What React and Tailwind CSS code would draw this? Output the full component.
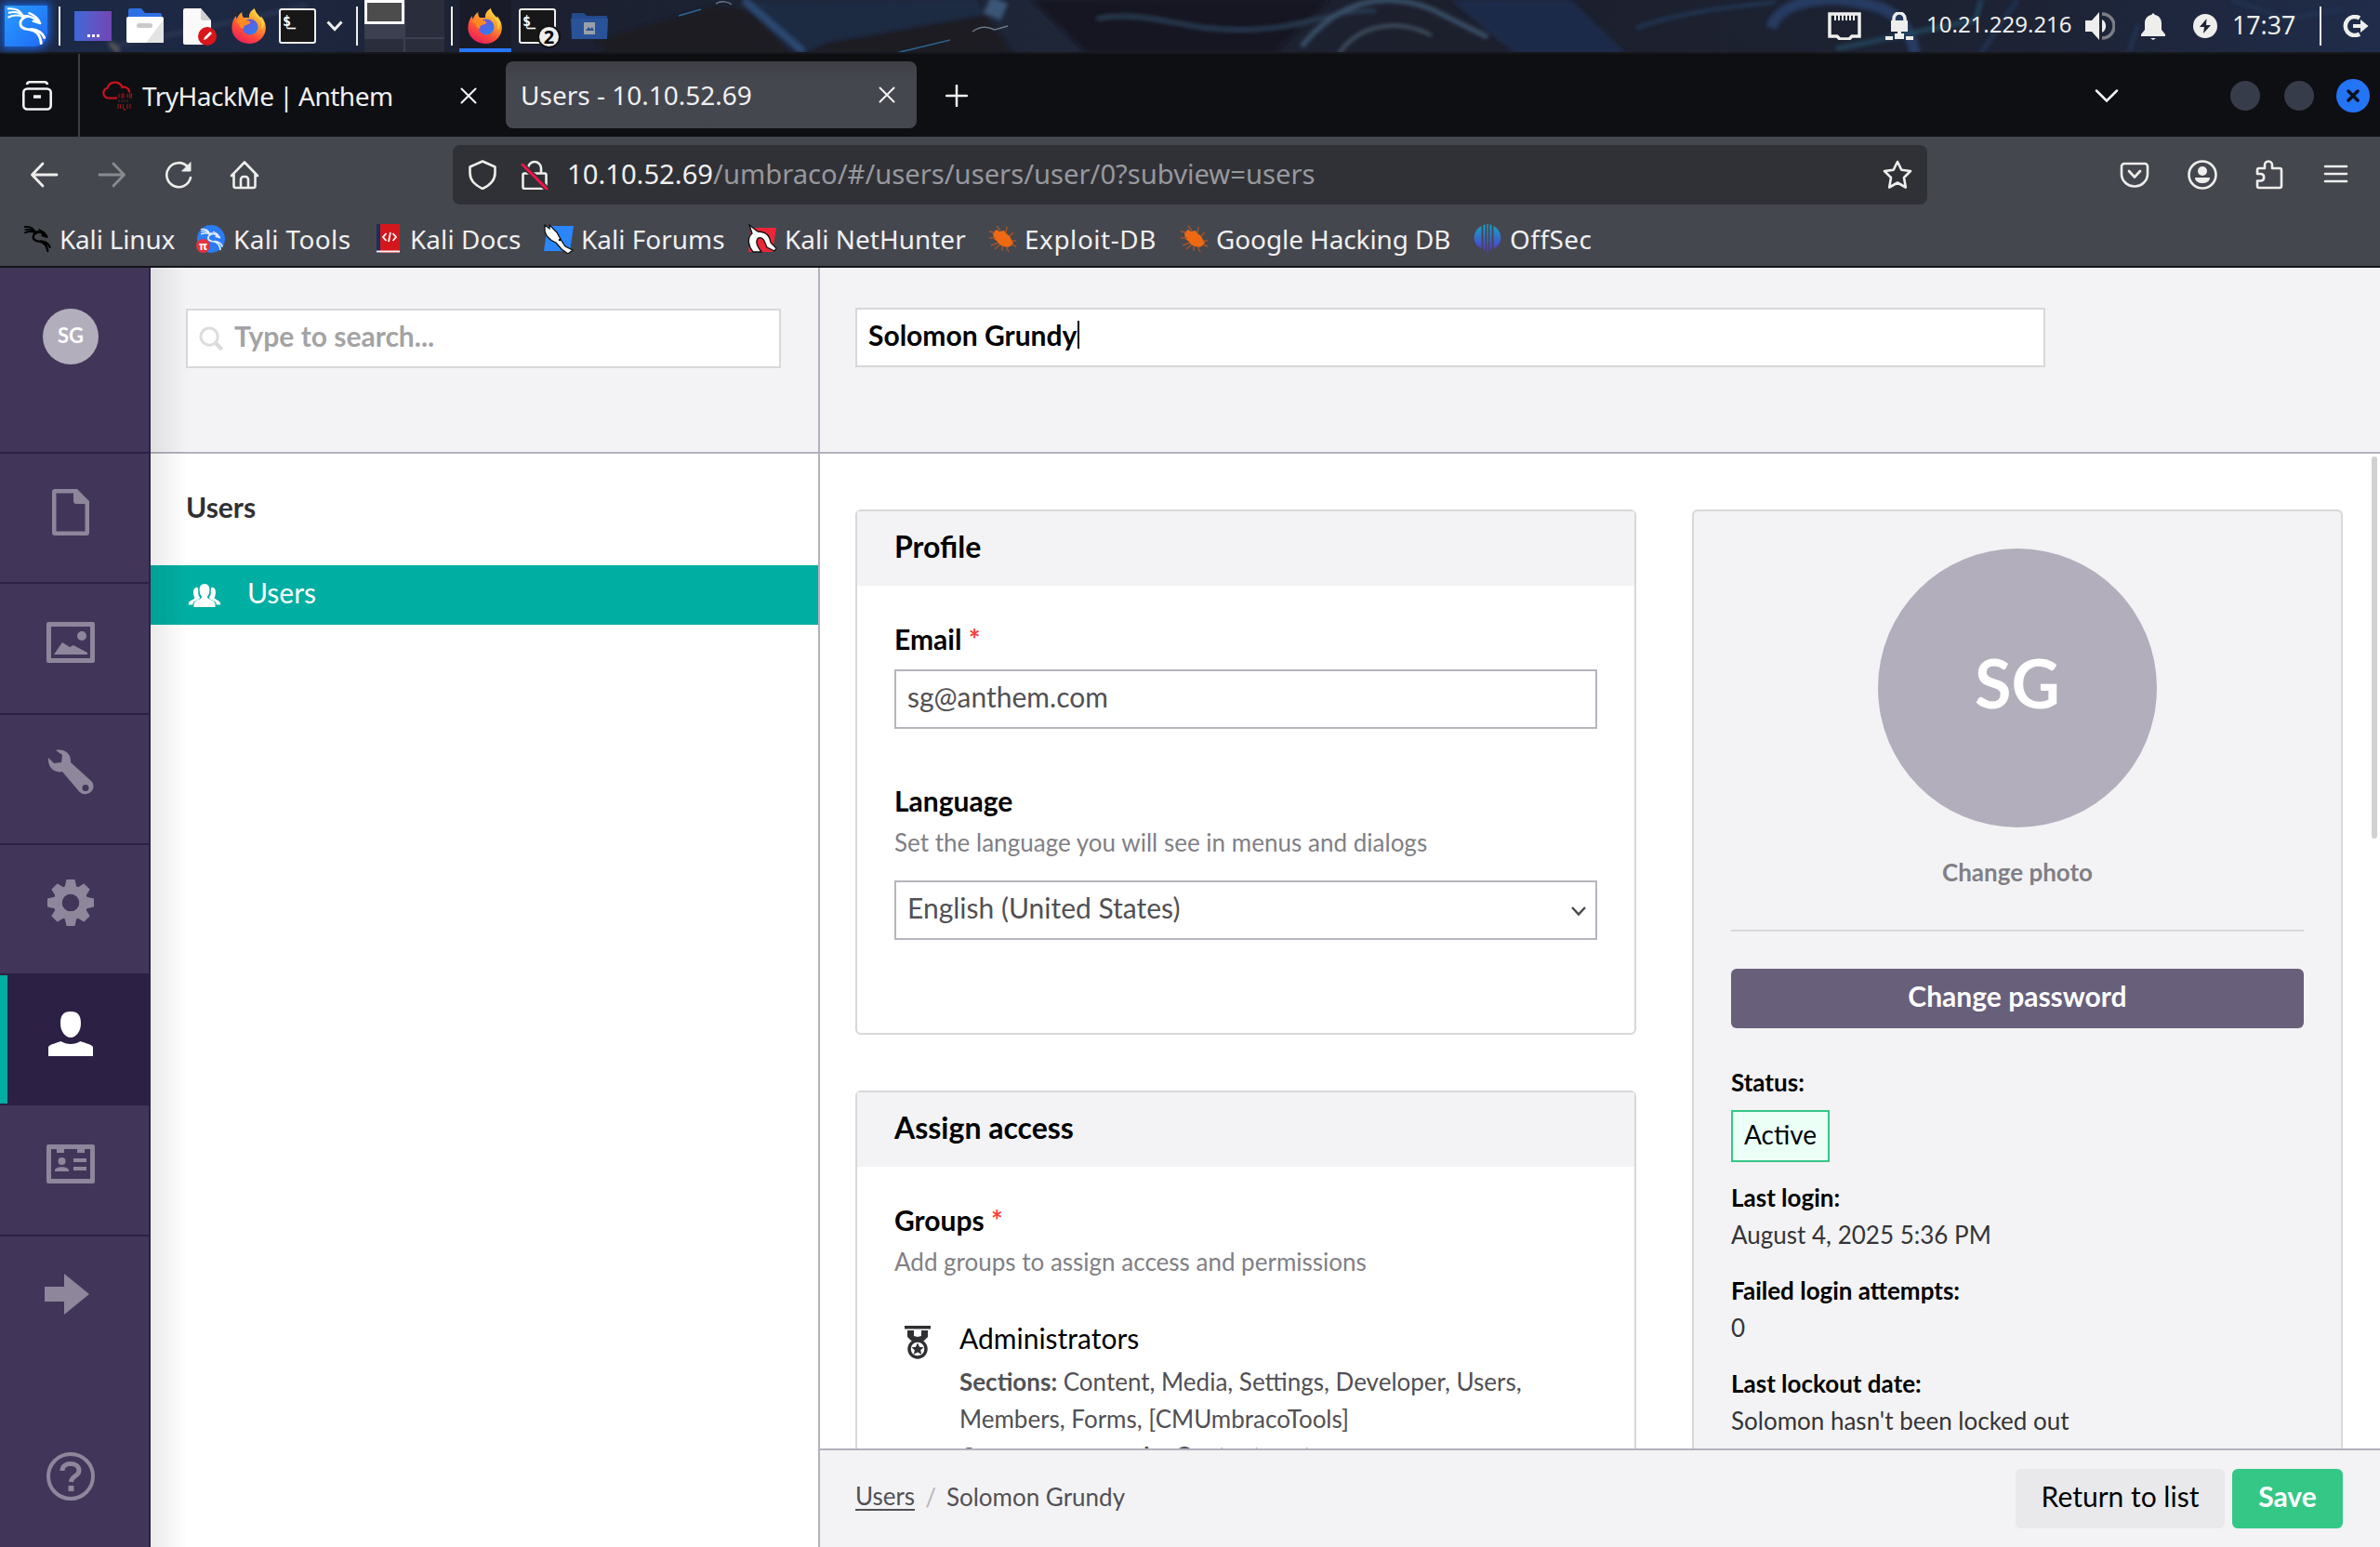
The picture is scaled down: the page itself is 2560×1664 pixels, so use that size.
import React from "react";

function Dragon({ className = "", strokeWidth = 3 }) {
  return (
    <svg viewBox="4 5 48 46" className={className} fill="none" stroke="currentColor" strokeWidth={strokeWidth} strokeLinecap="round" strokeLinejoin="round">
      <path d="M8 8.500C16 8 21 10 24 15.500M9 13C15 11.500 20 12.500 24 16M8.500 18C14 15 19 15.500 25 17.500" strokeWidth={strokeWidth * 0.75} />
      <path d="M24 17.500L30 17C19 20 19 30 29 31.500C38 32.500 44 36 45 47.500M34 31.500C41 32 46 35 48.500 41" />
      <path d="M25 17C33 16 38 19 41 24M31.500 13.500C38 16 42 20 44 25L36 22.500" strokeWidth={strokeWidth * 0.8} />
    </svg>
  );
}

function Firefox({ id }) {
  return (
    <svg viewBox="0 0 38 38" className="size-[38px] shrink-0">
      <defs>
        <linearGradient id={id + "a"} x1="0.85" y1="0" x2="0.3" y2="1">
          <stop offset="0" stopColor="#ffe14a" />
          <stop offset="0.4" stopColor="#ff9a2b" />
          <stop offset="0.7" stopColor="#ff4a3a" />
          <stop offset="1" stopColor="#e81f5c" />
        </linearGradient>
        <linearGradient id={id + "b"} x1="0" y1="0" x2="0.6" y2="1">
          <stop offset="0" stopColor="#7a4bd8" />
          <stop offset="1" stopColor="#2f7df0" />
        </linearGradient>
      </defs>
      <path d="M25 0c0 5 3 7 6 10.500l1-2c4 5 5.500 10 4.500 15.500C35 32 28 38 19 38S1.500 32 .500 23C0 16.500 2 11.500 5 8c0 1.500 0 2.500.500 3.500C7 8 9 5.500 11.500 4c-.500 2 0 4.500 1.500 6h6c-.500-4 2-8 6-10z" fill={"url(#" + id + "a)"} />
      <circle cx="20" cy="20" r="8.500" fill={"url(#" + id + "b)"} />
      <path d="M5 14c3-3 6-3 8.500-2 2 .5 4 .5 7 3-1 2-3 2.500-5 3-2 .6-3 2-2 4-4-1-5.500-3-5-5.500-1.200-.6-2.200-1.300-3.500-2.500z" fill="#ff8a20" />
      <path d="M25 1c-1 5 3 8 6 12 2 3 2 7 1 10 2-1.500 3-4.500 3-8-2-5-8-8-10-14z" fill="#ffd84a" opacity=".85" />
    </svg>
  );
}

function Terminal() {
  return (
    <svg viewBox="0 0 40 38" className="h-[38px] w-[40px]">
      <rect x="1" y="1" width="38" height="36" rx="2" fill="#171717" stroke="#f0f0ee" strokeWidth="2" />
      <text x="4" y="19" fontSize="15" fontWeight="700" fontFamily="'DejaVu Sans Mono', monospace" fill="#fff" textLength="14">$_</text>
    </svg>
  );
}

function Wallpaper() {
  return (
    <svg viewBox="0 0 2560 58" preserveAspectRatio="none" className="absolute inset-0 h-[58px] w-full">
      <defs>
        <linearGradient id="wp" x1="0" x2="1" y1="0" y2="0">
          <stop offset="0" stopColor="#1c2a48" />
          <stop offset=".12" stopColor="#1d2740" />
          <stop offset=".22" stopColor="#1c2030" />
          <stop offset=".45" stopColor="#1e2638" />
          <stop offset=".6" stopColor="#1c1f2c" />
          <stop offset=".85" stopColor="#1d2334" />
          <stop offset="1" stopColor="#202c4a" />
        </linearGradient>
        <filter id="soft"><feGaussianBlur stdDeviation="2" /></filter>
      </defs>
      <rect width="2560" height="58" fill="url(#wp)" />
      <g filter="url(#soft)">
        <path d="M805 0h245l10 20-180 36h-22z" fill="#1f2a42" />
        <path d="M640 44l130-38 40 6 40 46H655z" fill="#1a1a22" />
        <path d="M800 0l64 56" stroke="#2c4a72" strokeWidth="8" />
        <path d="M866 56l24-10 170-30 30 42z" fill="#1a1b24" />
        <path d="M1075 0l-8 18" stroke="#3b5576" strokeWidth="20" />
        <path d="M1110 0l60 58h200l60-58z" fill="#171820" />
        <path d="M1180 20c60-10 90 14 160 12s90-22 140-20" stroke="#2c3d55" strokeWidth="4" fill="none" />
        <path d="M1400 50c40-50 90-60 140-40l60 30" stroke="#3a536c" strokeWidth="5" fill="none" />
        <path d="M1440 58c20-30 60-40 100-20" stroke="#4b5e70" strokeWidth="3" fill="none" />
        <path d="M1560 0l70 58h120L1690 0z" fill="#1f2c48" />
        <path d="M1760 30c60-20 90-20 150-28" stroke="#243e5e" strokeWidth="3" fill="none" />
        <path d="M1905 30c10-30 60-36 100-26 40 6 50 30 55 54" stroke="#263a62" strokeWidth="12" fill="none" />
        <path d="M1975 52c30-4 90-20 150-30l6-22" stroke="#21455c" strokeWidth="5" fill="none" />
        <path d="M2130 58l40-58M2290 56l10-30M2400 0l60 20 60-10" stroke="#20304f" strokeWidth="5" fill="none" />
        <path d="M120 50l60-12 150-32" stroke="#2c3852" strokeWidth="4" />
        <path d="M118 46l10 10" stroke="#5d5b5a" strokeWidth="5" />
      </g>
      <path d="M730 17l24-7M964 57l58-14" stroke="#2d6596" strokeWidth="1.500" />
      <path d="M770 4c6-4 14-2 17 1M1046 34c8-6 16-6 24-2l14-4" stroke="#6b7788" strokeWidth="1.500" fill="none" />
      <rect y="56" width="2560" height="2" fill="#17181d" />
    </svg>
  );
}

function Taskbar() {
  return (
    <div className="relative h-[58px] w-full overflow-hidden bg-[#1d2333]">
      <Wallpaper />
      <div className="relative flex h-[56px] items-center">
        <div className="ml-[5px] flex h-[44px] w-[46px] items-center justify-center rounded-br-[14px] bg-linear-to-br from-[#2a9dff] to-[#2268f5] shadow-[0_0_8px_3px_#1b5fd0]">
          <Dragon className="h-[44px] w-[46px] text-white" />
        </div>
        <div className="ml-3 h-[42px] w-[2px] bg-[#eeeeec]" />
        <div className="ml-[15px] flex h-8 w-10 items-end justify-center gap-[2px] bg-linear-to-r from-[#3b68d8] to-[#7145b4] pb-1">
          <i className="size-[3px] bg-white" /><i className="size-[3px] bg-white" /><i className="size-[3px] bg-white" />
        </div>
        <svg viewBox="0 0 42 38" className="ml-[15px] h-[38px] w-[42px]">
          <path d="M3 2a2 2 0 012-2h12l4 5h16a2 2 0 012 2v6H3z" fill="#2f6fe4" />
          <rect x="1" y="9" width="40" height="28" rx="2" fill="#fff" />
          <path d="M41 12v25H22z" fill="#e4e4e4" />
          <rect x="12" y="16" width="17" height="5" rx="2.500" fill="#c9c9c9" />
        </svg>
        <svg viewBox="0 0 38 42" className="ml-[19px] h-[42px] w-[38px]">
          <path d="M1 4a2 2 0 012-2h17l11 13v24a2 2 0 01-2 2H3a2 2 0 01-2-2z" fill="#fafafa" />
          <path d="M20 2l11 13H22a2 2 0 01-2-2z" fill="#d0d0d0" />
          <circle cx="27" cy="32" r="10" fill="#d8161b" />
          <path d="M23 36l1-3 6-6 2 2-6 6z" fill="#fff" />
        </svg>
        <div className="ml-[15px]"><Firefox id="ffa" /></div>
        <div className="ml-[13px]"><Terminal /></div>
        <svg viewBox="0 0 18 12" className="ml-[11px] h-3 w-[18px]" fill="none" stroke="#eeeeec" strokeWidth="3"><path d="M1.500 1.500l7.500 8 7.500-8" /></svg>
        <div className="ml-[14px] h-[42px] w-[2px] bg-[#eeeeec]" />
        <div className="ml-[7px] grid h-[56px] w-[86px] grid-cols-2 gap-[2px] bg-[#3b3f50]">
          <div className="-mr-px h-[26px] border-[3px] border-white bg-[#4c4c4c]" />
          <div className="bg-[#2a2d3b]" /><div className="bg-[#2a2d3b]" /><div className="bg-[#2a2d3b]" />
        </div>
        <div className="ml-[7px] h-[42px] w-[2px] bg-[#eeeeec]" />
        <div className="ml-[7px] flex h-[56px] w-[56px] items-center justify-center border-b-4 border-[#2777ff] bg-[#191b28] pt-1">
          <Firefox id="ffb" />
        </div>
        <div className="relative ml-2">
          <Terminal />
          <div className="absolute left-[20px] top-[18px] flex size-[25px] items-center justify-center rounded-full border-2 border-[#111] bg-[#eeeeec] font-['Noto_Sans',sans-serif] text-[20px] font-bold leading-none text-black">2</div>
        </div>
        <svg viewBox="0 0 40 28" className="ml-[16px] h-7 w-10">
          <path d="M1 0h13l3 3h22v24H1z" fill="#234a8c" />
          <path d="M0 6h40l-1 22H1z" fill="#2a5298" />
          <rect x="14" y="10" width="12" height="13" fill="#9aa0a8" />
          <path d="M16 19l3-4 2 2 2-2 2 4z" fill="#2a5298" />
        </svg>
        <div className="flex-1" />
        <svg viewBox="0 0 36 30" className="h-[30px] w-9" fill="none">
          <path d="M2 2h32v24h-8l-3 3H13l-3-3H2z" stroke="#eeeeec" strokeWidth="3.500" />
          <path d="M8 3v6M12 3v6M16 3v6M20 3v6M24 3v6M28 3v6" stroke="#eeeeec" strokeWidth="2" />
        </svg>
        <svg viewBox="0 0 30 30" className="ml-[26px] h-[30px] w-[30px]">
          <path d="M9 10V7a6 6 0 0112 0v3" stroke="#eeeeec" strokeWidth="3.500" fill="none" />
          <path d="M6 9h18v12H6zM13 20h4v3h-4zM10 23h10v6H10zM0 26h8v4H0zM22 26h8v4h-8z" fill="#eeeeec" />
        </svg>
        <span className="ml-[14px] w-[157px] whitespace-nowrap pb-[5px] font-['Noto_Sans',sans-serif] text-[24px] leading-8 text-[#eeeeec]">10.21.229.216</span>
        <svg viewBox="0 0 32 30" className="ml-[14px] h-[30px] w-8">
          <path d="M0 9h7l8-9v30l-8-9H0z" fill="#eeeeec" />
          <path d="M18 8a8 8 0 010 14z" fill="#eeeeec" />
          <path d="M18 2a13 13 0 010 26" stroke="#7b7e86" strokeWidth="3.500" fill="none" />
        </svg>
        <svg viewBox="0 0 26 29" className="ml-[28px] h-[29px] w-[26px]" fill="#eeeeec">
          <path d="M13 0l2 2c5 1 7 5 7 9v7l4 5v2H0v-2l4-5v-7c0-4 2-8 7-9zM10 27h6l-3 2z" />
        </svg>
        <svg viewBox="0 0 26 26" className="ml-[30px] size-[26px]">
          <circle cx="13" cy="13" r="13" fill="#eeeeec" />
          <path d="M14.500 5L7 14h5l-1 7 8-9h-5z" fill="#1d2333" />
        </svg>
        <span className="ml-[16px] w-[70px] whitespace-nowrap pb-[2px] font-['Noto_Sans',sans-serif] text-[26.670px] leading-9 text-[#eeeeec]">17:37</span>
        <div className="ml-[24px] h-[42px] w-[2px] bg-[#eeeeec]" />
        <svg viewBox="0 0 28 24" className="ml-[23px] mr-[12px] h-6 w-7">
          <path d="M18 3.500A10 10 0 1018 20.500" stroke="#eeeeec" strokeWidth="4.500" fill="none" />
          <path d="M11 10h8V5l8.500 7-8.500 7v-5h-8z" fill="#eeeeec" />
        </svg>
      </div>
    </div>
  );
}

function Cross() {
  return <svg viewBox="0 0 18 18" className="size-[18px]" stroke="#f2f2f2" strokeWidth="2" strokeLinecap="round"><path d="M1.500 1.500l15 15M16.500 1.500l-15 15" /></svg>;
}

function TabBar() {
  return (
    <div className="flex h-[89px] items-stretch bg-[#0e0f13] font-['Noto_Sans',sans-serif] text-[28px] text-[#f0f0f0]">
      <div className="flex w-[86px] items-center border-r-2 border-[#3d3f46] pl-6">
        <svg viewBox="0 0 32 32" className="size-8" fill="none" stroke="#f2f2f2" strokeWidth="2.600">
          <path d="M5 4a3 3 0 013-2.700h16A3 3 0 0127 4" /><rect x="1.300" y="8.500" width="29.400" height="22" rx="4" /><path d="M12 17h8" strokeWidth="3.500" />
        </svg>
      </div>
      <div className="flex w-[458px] items-center pl-[24px] pr-[31px]">
        <svg viewBox="0 0 32 32" className="size-8" fill="none">
          <path d="M16 18.500H6.500a5.500 5.500 0 01-1-10.800A8.500 8.500 0 0121.500 7 6 6 0 0129 10.500v2" stroke="#c9151b" strokeWidth="2.200" />
          <path d="M18 14v4M21 14v4h2v-4h-2M27 14v4M29.500 14v4h2v-4h-2M17 25v5M19.500 25v5M22.500 25v5M27 25v5M30 25v5" stroke="#8d181c" strokeWidth="1.200" />
          <path d="M18 20v3M21 20v3M24 20v3M27 20v3" stroke="#42282a" strokeWidth="1.200" />
          <path d="M23 31h2" stroke="#8d181c" strokeWidth="2" />
        </svg>
        <span className="ml-[11px] flex-1 whitespace-nowrap tracking-[-0.5px] [word-spacing:-1px]">TryHackMe | Anthem</span>
        <Cross />
      </div>
      <div className="my-2 mb-[9px] flex w-[442px] items-center rounded-lg bg-linear-to-b from-[#3f4046] to-[#45474f] to-30% pl-4 pr-[23px]">
        <span className="flex-1 whitespace-nowrap">Users - 10.10.52.69</span>
        <Cross />
      </div>
      <div className="flex flex-1 items-center pl-[31px]">
        <svg viewBox="0 0 24 24" className="mt-px size-6" stroke="#f2f2f2" strokeWidth="2.500" strokeLinecap="round"><path d="M12 1v22M1 12h22" /></svg>
        <div className="flex-1" />
        <svg viewBox="0 0 26 14" className="h-[14px] w-[26px]" fill="none" stroke="#f2f2f2" strokeWidth="2.500" strokeLinecap="round"><path d="M2 1.500l11 11 11-11" /></svg>
        <div className="ml-[120px] size-8 rounded-full bg-[#373c4a]" />
        <div className="ml-[26px] size-8 rounded-full bg-[#373c4a]" />
        <div className="ml-[24px] mr-[11px] flex size-9 items-center justify-center rounded-full bg-[#2474f6]">
          <svg viewBox="0 0 14 14" className="size-[14px]" stroke="#0b0f1a" strokeWidth="3.500" strokeLinecap="round"><path d="M2 2l10 10M12 2L2 12" /></svg>
        </div>
      </div>
    </div>
  );
}

function Stroke({ children, w = 32, muted, className = "" }) {
  return (
    <svg viewBox="0 0 32 32" width={w} height={w} fill="none" stroke={muted ? "#8a8b90" : "#eeeeec"} strokeWidth="2.600" strokeLinecap="round" strokeLinejoin="round" className={"shrink-0 " + className}>
      {children}
    </svg>
  );
}

function NavBar() {
  return (
    <div className="flex h-[81px] items-center bg-[#45474f] pl-8">
      <Stroke><path d="M29 16H3M14 4L2.500 16 14 28" strokeWidth="2.800" /></Stroke>
      <Stroke muted className="ml-10"><path d="M3 16h26M18 4l11.500 12L18 28" strokeWidth="2.800" /></Stroke>
      <Stroke className="ml-10"><path d="M29 19A13 13 0 1 1 26 7.500" /><path d="M29 3v9h-9z" fill="#eeeeec" strokeWidth="1" /></Stroke>
      <Stroke className="ml-[39px]"><path d="M2 17L16 2.500 30 17M4.500 15v13a2 2 0 002 2h19a2 2 0 002-2V15M12 29V21a3 3 0 013-3h2a3 3 0 013 3v8" /></Stroke>
      <div className="ml-[208px] flex h-16 w-[1586px] items-center rounded-lg bg-[#303136] pl-4 pr-4">
        <Stroke><path d="M16 1.500L2.500 7.500V14c0 7 5 13 13.500 17 8.500-4 13.500-10 13.500-17V7.500z" /></Stroke>
        <Stroke className="ml-6"><path d="M9 14V9a7 7 0 0114 0v5M5 14.500h22a1.500 1.500 0 011.500 1.500v13a2 2 0 01-2 2h-21a2 2 0 01-2-2V16A1.500 1.500 0 015 14.500z" /><path d="M3 5l26 26" stroke="#303136" strokeWidth="6" /><path d="M3 5l26 26" stroke="#f0144a" strokeWidth="3" /></Stroke>
        <span className="ml-[19px] flex-1 whitespace-nowrap pt-px font-['Noto_Sans',sans-serif] text-[29.200px] text-[#f0f0f0]">10.10.52.69<span className="text-[#97989c]">/umbraco/#/users/users/user/0?subview=users</span></span>
        <Stroke><path d="M16 2l4.300 8.800 9.700 1.200-7 7 1.800 10.500L16 24.500 7.200 29.500 9 19l-7-7 9.700-1.200z" /></Stroke>
      </div>
      <div className="flex-1" />
      <Stroke><path d="M5 4h22a3 3 0 013 3v8a14 13.500 0 01-28 0V7a3 3 0 013-3zM10 12l6 6.500 6-6.500" /></Stroke>
      <Stroke className="ml-[41px]"><circle cx="16" cy="16" r="14.500" /><circle cx="16" cy="12" r="5" fill="#eeeeec" stroke="none" /><path d="M8 19h16c0 4-4 6-8 6s-8-2-8-6z" fill="#eeeeec" stroke="none" /></Stroke>
      <Stroke className="ml-10"><path d="M11 9V5.500a4 4 0 018 0V9h8a2 2 0 012 2v17a2 2 0 01-2 2H5a2 2 0 01-2-2v-5.500h4a3.800 3.800 0 000-7.500H3V11a2 2 0 012-2z" /></Stroke>
      <Stroke className="ml-10 mr-[31px]"><path d="M4 7h23M4 15h23M4 23h23" /></Stroke>
    </div>
  );
}

const crab = (
  <svg viewBox="0 0 32 32" className="size-8" fill="#ee6a12">
    <path d="M6 9l4-3 3 2 5-1 2 3 4 3 2 4 2 3-2 3-4 2-5-1-4-2-3-4-3-2z" />
    <path d="M8 9L2 8M9 15H2M12 20l-8 3M14 7l-4-5M20 10l1-7M24 13l4-4M26 18h5M26 22l5 2M20 24l3 6M14 22l-6 5M16 23v6" stroke="#a5562a" strokeWidth="1.400" />
  </svg>
);

const bookmarks = [
  ["Kali Linux", "w-[187px]", "tracking-[-0.15px]", <Dragon className="size-8 text-black" strokeWidth={3.6} />],
  ["Kali Tools", "w-[190px]", "tracking-[0.4px]", (
    <span className="relative flex size-[30px] items-center justify-center rounded-full bg-[#2b7cf6]">
      <Dragon className="size-[27px] text-[#e4efff]" strokeWidth={3} />
      <span className="absolute -left-px bottom-0 flex size-[15px] items-center justify-center rounded-full bg-[#e8313a] font-['Noto_Sans',sans-serif] text-[12px] font-bold leading-none text-white">π</span>
    </span>
  )],
  ["Kali Docs", "w-[184px]", "tracking-[0.1px]", (
    <svg viewBox="0 0 32 32" className="size-8">
      <path d="M4 0h25v31H4z" fill="#d4171c" /><path d="M4 0h4v31H4z" fill="#1c2c5c" /><path d="M4 28.500h25v2H4z" fill="#f5f5f5" />
      <path d="M14.500 10L11 14l3.500 4M21.500 10l3.500 4-3.500 4M19 9l-2 10" stroke="#fff" strokeWidth="1.800" fill="none" />
    </svg>
  )],
  ["Kali Forums", "w-[219px]", "tracking-[0.05px]", (
    <svg viewBox="0 0 32 32" className="size-8">
      <path d="M4 2h28l-4 27H0z" fill="#2a86fa" />
      <path d="M1 1l5 4 0-4 8 8 5 9 4 6 8 4-5 4-7-5-6-7C6 17 2 12 1 8z" fill="#fff" stroke="#111" strokeWidth="1.300" /><circle cx="17" cy="17" r="1.200" />
    </svg>
  )],
  ["Kali NetHunter", "w-[258px]", "tracking-[0.05px]", (
    <svg viewBox="0 0 32 32" className="size-8">
      <path d="M4 4h27l-4 26H1z" fill="#ea2638" />
      <path d="M2 1l9 7c8 0 13 4 14 12l6 6-2 3-8-4-3-7c-3-5-7-4-8 0-1 4 2 8 5 12H6C1 24-1 15 5 10z" fill="#fff" stroke="#111" strokeWidth="1.300" />
    </svg>
  )],
  ["Exploit-DB", "w-[206px]", "tracking-[0.57px]", crab],
  ["Google Hacking DB", "w-[316px]", "tracking-[-0.05px]", crab],
  ["OffSec", "w-[160px]", "tracking-[0.5px]", (
    <svg viewBox="0 0 32 32" className="size-8">
      <defs><linearGradient id="os" x1="0" y1="0" x2="0" y2="1"><stop offset="0" stopColor="#14a8c4" /><stop offset="1" stopColor="#5a2ad0" /></linearGradient></defs>
      <path d="M9.500 2v24C-1 22-1 8 9.500 2zM22.500 2v24c10.500-4 10.500-18 0-24zM11.500 1l2-.5v29l-2-3zM18.500.5l2 .5v25.500l-2 3zM15.300 0h1.400v32h-1.400z" fill="url(#os)" />
    </svg>
  )],
];

function Bookmarks() {
  return (
    <div className="flex h-[60px] items-start border-b-2 border-[#141519] bg-[#45474f] pl-6 pt-[9px]">
      {bookmarks.map(([label, width, tracking, icon]) => (
        <div key={label} className={"flex h-10 shrink-0 items-center gap-2 " + width}>
          <div className="flex size-8 shrink-0 items-center justify-center">{icon}</div>
          <span className={"whitespace-nowrap font-['Noto_Sans',sans-serif] text-[27.900px] leading-10 text-[#f0f0f0] " + tracking}>{label}</span>
        </div>
      ))}
    </div>
  );
}

const C = "#8e869b";
const sections = [
  <svg viewBox="0 0 40 50" className="h-[50px] w-10"><path fillRule="evenodd" d="M3 0h24l13 13v34a3 3 0 01-3 3H3a3 3 0 01-3-3V3a3 3 0 013-3zM4.500 4.500v41h31V16H26a3 3 0 01-3-3V4.500z" fill={C} /></svg>,
  <svg viewBox="0 0 52 44" className="h-11 w-[52px]"><path fillRule="evenodd" d="M2 0h48a2 2 0 012 2v40a2 2 0 01-2 2H2a2 2 0 01-2-2V2a2 2 0 012-2zM5 5v34h42V5z" fill={C} /><circle cx="38" cy="15" r="5" fill={C} /><path d="M8 35l9-13 8 5 4-2 15 8v2z" fill={C} /></svg>,
  <svg viewBox="0 0 50 50" className="mb-[2px] size-[50px]"><path fillRule="evenodd" d="M9 1c8-2 17 3 16 13l22 20c5 5 2 13-5 14-3 1-7-1-9-4L16 24C8 26 0 20 1 9l6 6 8-1 1-8zM41 38a3.500 3.500 0 100 7 3.500 3.500 0 000-7z" fill={C} /></svg>,
  <svg viewBox="0 0 50 50" className="mb-[2px] size-[50px]">
    <g fill={C}>{[0, 45, 90, 135].map((a) => <path key={a} transform={`rotate(${a} 25 25)`} d="M20.500 0h9l2 9v32l-2 9h-9l-2-9V9z" clipPath="url(#ring)" />)}</g>
    <defs><clipPath id="ring"><path clipRule="evenodd" d="M0 0h50v50H0zM25 15.500a9.500 9.500 0 100 19 9.500 9.500 0 000-19z" /></clipPath></defs>
    <circle cx="25" cy="25" r="14" fill="none" stroke={C} strokeWidth="9" />
  </svg>,
  <svg viewBox="0 0 48 48" className="size-12" fill="#fff"><path d="M24 0c8 0 11 4 11 13 0 8-5 15-11 15s-11-7-11-15C13 4 16 0 24 0zM0 38c2-3 9-4 13.500-6 6 4 15 4 21 0C39 34 46 35 48 38v10H0z" /></svg>,
  <svg viewBox="0 0 52 42" className="mb-[2px] h-[42px] w-[52px]"><path fillRule="evenodd" d="M2 0h48a2 2 0 012 2v38a2 2 0 01-2 2H2a2 2 0 01-2-2V2a2 2 0 012-2zM5 5v32h42V5h-6v4h-8V5H19v4h-8V5z" fill={C} /><circle cx="16.500" cy="18" r="4" fill={C} /><path d="M9 28c0-5 15-5 15 0v1H9zM29 15h14v4H29zM29 24h14v4H29z" fill={C} /></svg>,
  <svg viewBox="0 0 48 44" className="mb-[4px] mr-2 h-11 w-12" fill={C}><path d="M0 14h21V0l27 22-27 22V30H0z" /></svg>,
];

function Sidebar() {
  return (
    <div className="flex w-[162px] shrink-0 flex-col border-r-2 border-[#2c2144] bg-[#413659]">
      <div className="flex h-[200px] items-start border-b-2 border-[#2c2144] pl-[46px] pt-11">
        <div className="flex size-[60px] items-center justify-center rounded-full bg-[#b2aebc] pb-[4px] text-[22px] font-bold text-white">SG</div>
      </div>
      {sections.map((icon, i) => {
        const active = i === 4;
        return (
          <div key={i} className={"flex h-[140.300px] items-center justify-center pb-3 pr-2 " + (active ? "border-b-2 border-[#2c2144] bg-[#2c2144] shadow-[inset_8px_0_0_#00aea2]" : i === 6 ? "" : "border-b-2 border-[#2c2144]")}>
            {icon}
          </div>
        );
      })}
      <div className="flex flex-1 items-end justify-center pb-[50px] pr-2">
        <div className="flex size-[52px] items-center justify-center rounded-full border-[4.500px] border-[#8e869b]">
          <svg viewBox="0 0 24 34" className="h-[34px] w-6" fill="none" stroke={C} strokeWidth="5"><path d="M3 11c0-10 18-10 18 0 0 6-8 5-8.500 12" /><path d="M9.500 27h6v6h-6z" fill={C} stroke="none" /></svg>
        </div>
      </div>
    </div>
  );
}

function Tree() {
  return (
    <div className="relative w-[720px] shrink-0 border-r-2 border-[#b4b0be] bg-white">
      <div className="h-[200px] border-b-2 border-[#b4b0be] bg-[#f3f3f5] pl-[38px] pt-11">
        <div className="flex h-16 w-[640px] items-center border-2 border-[#d8d7d9] bg-white pb-[5px] pl-3">
          <svg viewBox="0 0 28 28" className="mt-[6px] size-[27px]" fill="none" stroke="#dcdcdd"><circle cx="11.500" cy="11.500" r="9.500" strokeWidth="3" /><path d="M19 19l6.500 7" strokeWidth="4.500" /></svg>
          <span className="ml-[11px] text-[30px] font-bold text-[#a3a3a5]">Type to search...</span>
        </div>
      </div>
      <div className="flex h-[120px] items-center pb-[6px] pl-[38px] text-[30px] font-bold text-[#303033]">Users</div>
      <div className="flex h-16 items-center bg-[#00aea2] pl-10">
        <svg viewBox="0 0 36 26" className="h-[25px] w-9" fill="#fff">
          <path d="M18 0c4 0 6 3 5.500 8 0 3-1.500 5-2.500 6.500 0 3 8 3 9 8V26H6v-3.500c1-5 9-5 9-8C14 13 12.500 11 12.500 8 12 3 14 0 18 0z" />
          <path d="M9 4c2 0 2 1 2 5s1 5 2 6l-1 2-6 3-1.500 3.500H0c0-6 6-5 7-8C5 13 4.500 4 9 4zM27 4c-2 0-2 1-2 5s-1 5-2 6l1 2 6 3 1.500 3.500H36c0-6-6-5-7-8 2-2.500 2.500-11.500-2-11.500z" />
        </svg>
        <span className="ml-[28px] pb-[6px] text-[30px] text-white">Users</span>
      </div>
      <div className="pointer-events-none absolute inset-y-0 left-0 w-10 bg-linear-to-r from-black/8 to-transparent" />
    </div>
  );
}

function Card({ title, className, children }) {
  return (
    <div className={"w-[840px] shrink-0 rounded-md border-2 border-[#d8d7d9] bg-white " + className}>
      <div className="flex h-20 items-center bg-[#f3f3f5] pb-[4px] pl-10 text-[32px] font-bold text-black">{title}</div>
      <div className="px-10 pt-[37px]">{children}</div>
    </div>
  );
}

function Label({ children, required }) {
  return <div className="text-[30px] font-bold leading-10 text-black">{children}{required && <span className="text-[#fe3e39]"> *</span>}</div>;
}

function Detail({ label, value }) {
  return (
    <div className="h-[100px] text-[26px] leading-10 text-[#343437]">
      <div className="font-bold text-black">{label}</div>
      <div>{value}</div>
    </div>
  );
}

function Editor() {
  return (
    <div className="flex min-w-0 flex-1 flex-col bg-white">
      <div className="h-[200px] shrink-0 border-b-2 border-[#b4b0be] bg-[#f3f3f5] pl-[38px] pt-[43px]">
        <div className="flex h-16 w-[1280px] items-center border-2 border-[#d8d7d9] bg-white pb-[6px] pl-3 text-[30px] font-bold text-black">
          Solomon Grundy<span className="ml-px h-[30px] w-[2px] bg-black" />
        </div>
      </div>
      <div className="relative flex min-h-0 flex-1 items-start gap-[60px] overflow-hidden pl-[38px] pt-[60px]">
        <div className="flex flex-col gap-[60px]">
          <Card title="Profile" className="h-[565px]">
            <Label required>Email</Label>
            <div className="mt-[13px] flex h-16 items-center border-2 border-[#b5b5bd] pb-[6px] pl-3 text-[30px] text-[#515054]">sg@anthem.com</div>
            <div className="h-[57px]" />
            <Label>Language</Label>
            <div className="mt-[5px] text-[26px] leading-10 tracking-[0.02px] text-[#817f85]">Set the language you will see in menus and dialogs</div>
            <div className="mt-[21px] flex h-16 items-center justify-between border-2 border-[#b5b5bd] pl-3 pr-[10px] text-[30px] text-[#515054]">
              <span className="pb-[6px]">English (United States)</span>
              <svg viewBox="0 0 16 10" className="mt-[2px] h-[10px] w-4" fill="none" stroke="#4a4a4c" strokeWidth="2.500"><path d="M1 1l7 7.500L15 1" /></svg>
            </div>
          </Card>
          <Card title="Assign access" className="h-[700px]">
            <Label required>Groups</Label>
            <div className="mt-[5px] text-[26px] leading-10 text-[#817f85]">Add groups to assign access and permissions</div>
            <div className="mt-[42px] flex">
              <svg viewBox="0 0 28 36" className="ml-[11px] mt-[7px] h-9 w-7 shrink-0">
                <path d="M0 0h28v3.500H0zM3 5h7v6l4 1 4-1V5h7v7l-4 4H7l-4-4z" fill="#303033" />
                <circle cx="14" cy="25" r="9" fill="#fff" stroke="#303033" strokeWidth="3.500" />
                <path d="M14 18.500l2 4.300 4.500.5-3.300 3 .9 4.500-4.100-2.300-4.100 2.300.9-4.500-3.300-3 4.500-.5z" fill="#303033" />
              </svg>
              <div className="ml-[31px] w-[660px]">
                <div className="text-[30px] leading-10 text-black">Administrators</div>
                <div className="mt-[7px] text-[26px] leading-10 text-[#515054]">
                  <div><b>Sections:</b> Content, Media, Settings, Developer, Users, Members, Forms, [CMUmbracoTools]</div>
                  <div><b>Content start node:</b> Content root</div>
                </div>
              </div>
            </div>
          </Card>
        </div>
        <div className="flex h-[1300px] w-[700px] flex-col rounded-md border-2 border-[#d8d7d9] bg-[#f3f3f5] px-10 pt-10">
          <div className="flex size-[300px] items-center justify-center self-center rounded-full bg-[#b2aebc] pb-[12px] text-[72px] font-bold text-white">SG</div>
          <div className="mt-[28px] text-center text-[26px] font-bold leading-10 text-[#817f85]">Change photo</div>
          <div className="mt-[42px] h-[2px] bg-[#d8d7d9]" />
          <div className="mt-10 flex h-16 shrink-0 items-center justify-center rounded-md bg-[#685f7b] pb-[6px] text-[30px] font-bold text-white">Change password</div>
          <div className="mt-[38px] text-[26px] font-bold leading-10 text-black">Status:</div>
          <div className="mt-[10px] flex h-14 items-center self-start border-2 border-[#35c786] bg-[#ebfff7] px-3 pb-[4px] text-[28px] text-black">Active</div>
          <div className="mt-[18px]">
            <Detail label="Last login:" value="August 4, 2025 5:36 PM" />
            <Detail label="Failed login attempts:" value="0" />
            <Detail label="Last lockout date:" value="Solomon hasn't been locked out" />
          </div>
        </div>
        <div className="absolute right-[3px] top-[3px] h-[411px] w-[6px] rounded-full bg-[#d0d1d2]" />
      </div>
      <div className="flex h-[106px] shrink-0 items-center border-t-2 border-[#b4b0be] bg-[#f3f3f5] pl-[38px] pr-10 text-[26px] text-[#515054]">
        <div className="flex items-center pb-[4px]">
          <span className="border-b-2 border-[#515054] leading-[28px]">Users</span>
          <span className="mx-[11px] text-[#b5b5bb]">/</span>
          <span>Solomon Grundy</span>
        </div>
        <div className="flex-1" />
        <div className="flex h-16 w-[225px] items-center justify-center rounded-md bg-[#e9e9eb] pb-[6px] text-[30px] text-black">Return to list</div>
        <div className="ml-2 flex h-16 w-[119px] items-center justify-center rounded-md bg-[#35c786] pb-[6px] text-[30px] font-bold text-white">Save</div>
      </div>
    </div>
  );
}

export default function App() {
  return (
    <div className="flex h-[1664px] w-[2560px] flex-col overflow-hidden bg-white font-['Lato',sans-serif]">
      <Taskbar />
      <TabBar />
      <NavBar />
      <Bookmarks />
      <div className="flex min-h-0 flex-1">
        <Sidebar />
        <Tree />
        <Editor />
      </div>
    </div>
  );
}
